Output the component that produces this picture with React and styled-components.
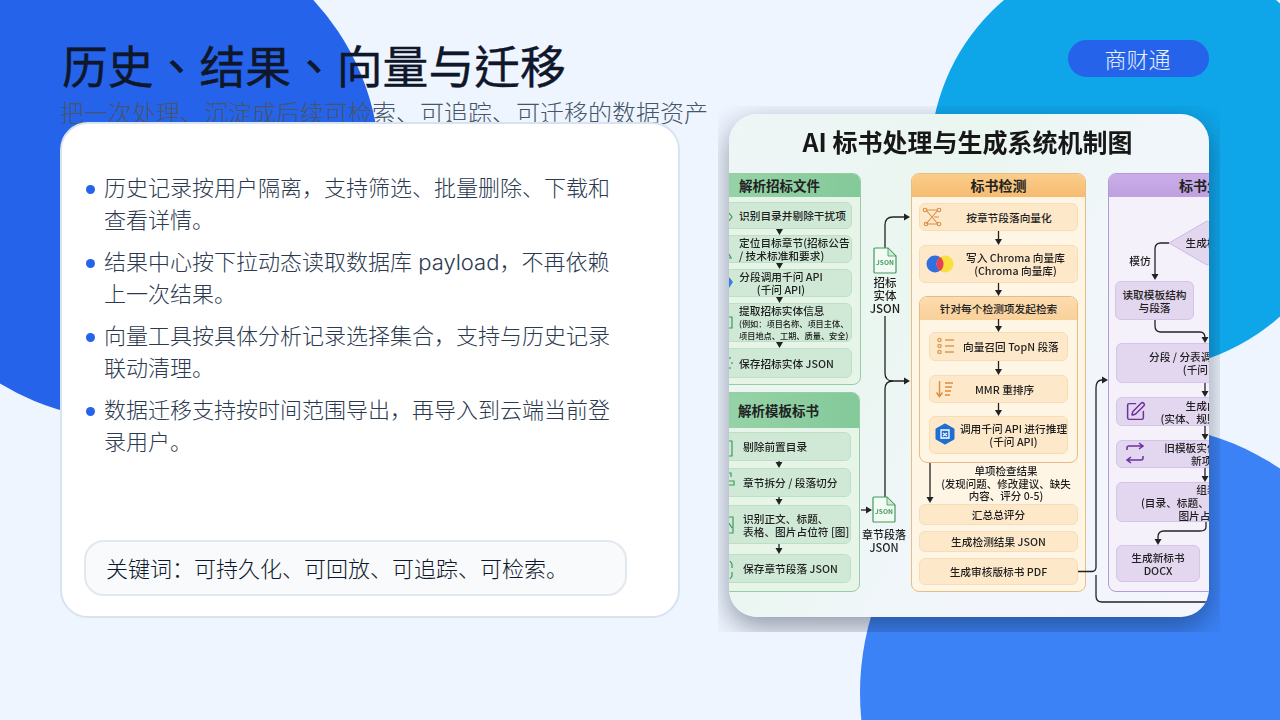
import React from 'react';
import styled, { createGlobalStyle } from 'styled-components';
import { SquarePen } from 'lucide-react';

const OX = 729;
const OY = 114;
const FONT = 'Inter, "Noto Sans CJK SC", "Noto Sans", sans-serif';
const DIAGRAM_FONT = '"Noto Sans CJK SC", "Noto Sans", sans-serif';

const Global = createGlobalStyle`
  html, body { margin: 0; padding: 0; background: #eef5ff; }
  body { font-family: ${FONT}; }
`;

const Slide = styled.div`
  position: relative;
  width: 1280px;
  height: 720px;
  overflow: hidden;
  background: #eef5ff;
  padding: 0 71px 0 60px;
  box-sizing: border-box;
`;

const Blob = styled.div`
  position: absolute;
  left: ${p => p.$x}px;
  top: ${p => p.$y}px;
  width: ${p => p.$size}px;
  height: ${p => p.$size}px;
  border-radius: 50%;
  background: ${p => p.$color};
`;

const Header = styled.header`
  position: relative;
  height: 122px;
  display: flex;
  justify-content: space-between;
  align-items: flex-start;
`;

const TitleBlock = styled.div`
  padding-top: 34px;
`;

const Title = styled.h1`
  margin: 0 0 0 2px;
  font-family: "Noto Sans CJK TC", "Noto Sans CJK SC", sans-serif;
  font-size: 45.8px;
  line-height: 60px;
  font-weight: 400;
  -webkit-text-stroke: 0.4px #0f172a;
  color: #0f172a;
  white-space: nowrap;
`;

const Subtitle = styled.p`
  margin: 4px 0 0;
  font-size: 24px;
  line-height: 32px;
  font-weight: 300;
  color: #475569;
  white-space: nowrap;
`;

const Pill = styled.div`
  margin-top: 40px;
  width: 141px;
  height: 37px;
  box-sizing: border-box;
  padding-right: 2px;
  border-radius: 19px;
  background: #2563eb;
  color: #e8f0ff;
  font-size: 22px;
  line-height: 40px;
  text-align: center;
  font-weight: 300;
`;

const Content = styled.main`
  position: relative;
  display: flex;
  align-items: flex-start;
  gap: 38px;
`;

const Card = styled.section`
  flex: none;
  width: 620px;
  height: 496px;
  box-sizing: border-box;
  background: #fff;
  border: 2px solid #d8e3f0;
  border-radius: 28px;
  padding: 48px 51px 20px 22px;
  display: flex;
  flex-direction: column;
  justify-content: space-between;
`;

const Bullets = styled.ul`
  list-style: none;
  margin: 0;
  padding: 0;
  display: flex;
  flex-direction: column;
  gap: 10px;
`;

const Bullet = styled.li`
  display: flex;
  align-items: flex-start;
  gap: 9px;
  font-size: 22px;
  line-height: 32px;
  font-weight: 300;
  color: #2c3a50;
`;

const Dot = styled.span`
  flex: none;
  width: 9px;
  height: 9px;
  margin: 13px 0 0 2px;
  border-radius: 50%;
  background: #2563eb;
`;

const Keywords = styled.div`
  height: 56px;
  box-sizing: border-box;
  padding-left: 20px;
  border: 2px solid #e2e8f0;
  border-radius: 20px;
  background: #f8fafc;
  color: #0f172a;
  font-size: 22px;
  font-weight: 300;
  line-height: 54px;
  white-space: nowrap;
`;

const ShadowClip = styled.div`
  flex: none;
  width: 502px;
  height: 526px;
  margin-top: -16px;
  padding: 8px 11px 0;
  box-sizing: border-box;
  overflow: hidden;
`;

const Figure = styled.figure`
  position: relative;
  margin: 0;
  width: 480px;
  height: 503px;
  border-radius: 28px;
  box-shadow: 0 10px 28px rgba(15, 23, 42, 0.42);
`;

const Canvas = styled.div`
  position: absolute;
  inset: 0;
  overflow: hidden;
  border-radius: 28px;
  background: linear-gradient(120deg, #eef6f6 0%, #eaf6f0 35%, #f1f6fb 60%, #f4f5fd 100%);
  color: #1f1f1f;
  font-family: ${DIAGRAM_FONT};
  font-weight: 500;
  filter: blur(0.3px);
`;

const DiagramTitle = styled.div`
  position: absolute;
  left: 0;
  right: 3px;
  top: 10px;
  text-align: center;
  font-size: 25px;
  line-height: 34px;
  font-weight: 700;
  color: #171717;
  white-space: nowrap;
`;

const TONES = {
  green: { panel: '#e7f5e9', line: '#97cca5', head: 'linear-gradient(90deg,#96d4a8,#84c99a)', soft: '', step: '#cfe9d6', edge: '#bce0c6' },
  orange: { panel: '#fff5e4', line: '#e7bd83', head: 'linear-gradient(180deg,#fbcd8a,#f6bb70)', soft: 'linear-gradient(180deg,#fcdcae,#f9d09a)', step: '#fde8ca', edge: '#f8dcb3' },
  purple: { panel: '#f5f1fb', line: '#b49bd8', head: 'linear-gradient(180deg,#c9ade8,#bfa0e0)', soft: '', step: '#e3d6ef', edge: '#d4c4e7' },
};

const Panel = styled.div`
  position: absolute;
  left: ${p => p.$x}px;
  top: ${p => p.$y}px;
  width: ${p => p.$w}px;
  height: ${p => p.$h}px;
  box-sizing: border-box;
  border: 1px solid ${p => TONES[p.$tone].line};
  border-radius: 8px;
  background: ${p => TONES[p.$tone].panel};
  overflow: hidden;
`;

const PanelHead = styled.div`
  height: ${p => p.$h}px;
  box-sizing: border-box;
  background: ${p => (p.$soft ? TONES[p.$tone].soft : TONES[p.$tone].head)};
  font-size: ${p => p.$size}px;
  line-height: ${p => p.$h}px;
  font-weight: ${p => (p.$soft ? 500 : 700)};
  color: #222;
  text-align: ${p => (p.$pad ? 'left' : 'center')};
  padding-left: ${p => p.$pad || 0}px;
  white-space: nowrap;
`;

const Step = styled.div`
  position: absolute;
  left: ${p => p.$x}px;
  top: ${p => p.$y}px;
  width: ${p => p.$w}px;
  height: ${p => p.$h}px;
  box-sizing: border-box;
  border: 1px solid ${p => TONES[p.$tone].edge};
  border-radius: 6px;
  background: ${p => TONES[p.$tone].step};
  display: flex;
  flex-direction: column;
  justify-content: center;
  align-items: ${p => (p.$pad ? 'flex-start' : 'center')};
  padding-left: ${p => p.$pad || p.$shift || 0}px;
  padding-right: ${p => p.$padRight || 0}px;
  font-size: 10.7px;
  line-height: 13px;
  white-space: nowrap;
  text-align: center;
`;

const Note = styled.span`
  font-size: ${p => p.$size}px;
  line-height: ${p => p.$lh}px;
`;

const Label = styled.div`
  position: absolute;
  left: ${p => p.$x}px;
  top: ${p => p.$y}px;
  width: ${p => p.$w}px;
  text-align: center;
  font-size: ${p => p.$size}px;
  line-height: ${p => p.$lh}px;
  white-space: nowrap;
`;

const Wires = styled.svg`
  position: absolute;
  left: 0;
  top: 0;
  width: 480px;
  height: 503px;
  pointer-events: none;
`;

const Pen = styled.div`
  position: absolute;
  left: 396px;
  top: 287px;
  color: #6d2fa3;
  display: flex;
`;

const panels = [
  { tone: 'green', x: 719, y: 173, r: 861, b: 385, head: 23, size: 13.5, pad: 19, title: '解析招标文件' },
  { tone: 'green', x: 719, y: 392, r: 860, b: 592, head: 35, size: 13.5, pad: 18, title: '解析模板标书' },
  { tone: 'orange', x: 911, y: 173, r: 1086, b: 592, head: 23, size: 14, title: '标书检测' },
  { tone: 'orange', x: 919, y: 296, r: 1078, b: 463, head: 23, size: 10.7, soft: true, title: '针对每个检测项发起检索' },
  { tone: 'purple', x: 1108, y: 173, r: 1306, b: 592, head: 23, size: 14, title: '标书生成' },
];

const steps = [
  { tone: 'green', x: 719, y: 202, r: 852, b: 229, pad: 19, lines: ['识别目录并剔除干扰项'] },
  { tone: 'green', x: 719, y: 235, r: 852, b: 263, pad: 19, lines: ['定位目标章节(招标公告', '/ 技术标准和要求)'] },
  { tone: 'green', x: 719, y: 269, r: 852, b: 297, padRight: 9, lines: ['分段调用千问 API', '(千问 API)'] },
  { tone: 'green', x: 719, y: 303, r: 852, b: 342, pad: 19, lines: ['提取招标实体信息'], notes: ['(例如：项目名称、项目主体、', '项目地点、工期、质量、安全)'] },
  { tone: 'green', x: 719, y: 348, r: 852, b: 378, pad: 19, lines: ['保存招标实体 JSON'] },
  { tone: 'green', x: 719, y: 432, r: 851, b: 461, pad: 23, lines: ['剔除前置目录'] },
  { tone: 'green', x: 719, y: 468, r: 851, b: 497, pad: 23, lines: ['章节拆分 / 段落切分'] },
  { tone: 'green', x: 719, y: 505, r: 851, b: 544, pad: 23, lines: ['识别正文、标题、', '表格、图片占位符 [图]'] },
  { tone: 'green', x: 719, y: 554, r: 851, b: 583, pad: 23, lines: ['保存章节段落 JSON'] },
  { tone: 'orange', x: 919, y: 203, r: 1078, b: 231, lines: ['按章节段落向量化'], shift: 21 },
  { tone: 'orange', x: 919, y: 245, r: 1078, b: 283, lines: ['写入 Chroma 向量库', '(Chroma 向量库)'], shift: 34 },
  { tone: 'orange', x: 929, y: 332, r: 1068, b: 361, lines: ['向量召回 TopN 段落'], pad: 33 },
  { tone: 'orange', x: 929, y: 375, r: 1068, b: 403, lines: ['MMR 重排序'], pad: 45 },
  { tone: 'orange', x: 929, y: 416, r: 1068, b: 454, lines: ['调用千问 API 进行推理', '(千问 API)'], shift: 30 },
  { tone: 'orange', x: 919, y: 504, r: 1078, b: 525, lines: ['汇总总评分'] },
  { tone: 'orange', x: 919, y: 531, r: 1078, b: 552, lines: ['生成检测结果 JSON'] },
  { tone: 'orange', x: 919, y: 558, r: 1078, b: 585, lines: ['生成审核版标书 PDF'] },
  { tone: 'purple', x: 1115, y: 281, r: 1194, b: 320, lines: ['读取模板结构', '与段落'] },
  { tone: 'purple', x: 1116, y: 343, r: 1298, b: 383, lines: ['分段 / 分表调用千问生成', '(千问 API)'] },
  { tone: 'purple', x: 1116, y: 397, r: 1298, b: 426, lines: ['生成内容', '(实体、规则、模板)'] },
  { tone: 'purple', x: 1116, y: 440, r: 1298, b: 468, lines: ['旧模板实体替换为', '新项目'] },
  { tone: 'purple', x: 1116, y: 482, r: 1298, b: 522, lines: ['组装', '(目录、标题、正文、表格、', '图片占位符)'] },
  { tone: 'purple', x: 1116, y: 545, r: 1200, b: 582, lines: ['生成新标书', 'DOCX'] },
];

const labels = [
  { x: 865, w: 40, y: 276, lh: 13, size: 11.5, lines: ['招标', '实体', 'JSON'] },
  { x: 854, w: 60, y: 528, lh: 13, size: 11, lines: ['章节段落', 'JSON'] },
  { x: 916, w: 180, y: 465, lh: 12.5, size: 10.5, lines: ['单项检查结果', '(发现问题、修改建议、缺失', '内容、评分 0-5)'] },
  { x: 1122, w: 36, y: 254, lh: 14, size: 10.7, lines: ['模仿'] },
  { x: 1167, w: 80, y: 236, lh: 14, size: 10.7, lines: ['生成模板'] },
];

const wires = [
  'M885 248V225Q885 217 893 217H905',
  'M885 316V373Q885 381 893 381H905',
  'M885 497V389Q885 381 893 381',
  'M861 510H868',
  'M1078 571.5H1092Q1096 571.5 1096 567V388Q1096 380 1102 380H1103',
  'M1096 575V596Q1096 602 1102 602H1209',
  'M930 463V497',
  'M1169 243H1161Q1155 243 1155 249V275',
  'M1155 320V326Q1155 332 1161 332H1200Q1205 332 1205 338',
  'M1206 522V527Q1206 531 1200 531H1164Q1158 531 1158 537V540',
];

const downs = [
  [779.5, 229, 235], [779.5, 263, 269], [779.5, 297, 303], [779.5, 342, 348],
  [779, 461, 468], [779, 497, 505], [779, 544, 554],
  [998.5, 231, 245], [998.5, 283, 296], [998.5, 319, 332], [998.5, 361, 375], [998.5, 403, 416],
  [1205, 383, 397], [1205, 426, 440], [1205, 468, 482],
];

const heads = [
  [910, 217, 'r'], [910, 381, 'r'], [872, 510, 'r'], [1108, 380, 'r'],
  [930, 503, 'd'], [1155, 280, 'd'], [1205, 343, 'd'], [1158, 545, 'd'],
];

const Head = ({ x, y, dir }) => (
  <polygon
    fill="#222"
    points={dir === 'r' ? `${x},${y} ${x - 6},${y - 3.5} ${x - 6},${y + 3.5}` : `${x},${y} ${x - 3.5},${y - 6} ${x + 3.5},${y - 6}`}
  />
);

const JsonDoc = ({ x, y }) => (
  <g>
    <path d={`M${x + 1} ${y}H${x + 14}L${x + 22} ${y + 8}V${y + 24}Q${x + 22} ${y + 25} ${x + 21} ${y + 25}H${x + 1}Q${x} ${y + 25} ${x} ${y + 24}V${y + 1}Q${x} ${y} ${x + 1} ${y}Z`} fill="#f2faf4" stroke="#3f9a5c" strokeWidth="1.2" />
    <path d={`M${x + 14} ${y}V${y + 8}H${x + 22}Z`} fill="#cfe9d6" stroke="#3f9a5c" strokeWidth="0.8" />
    <text x={x + 11} y={y + 17} fontSize="6.6" fontWeight="700" fill="#3f9a5c" textAnchor="middle">JSON</text>
  </g>
);

const Diagram = () => (
  <Canvas>
    <DiagramTitle>AI 标书处理与生成系统机制图</DiagramTitle>
    {panels.map(p => (
      <Panel key={p.title} $tone={p.tone} $x={p.x - OX} $y={p.y - OY} $w={p.r - p.x} $h={p.b - p.y}>
        <PanelHead $tone={p.tone} $h={p.head} $size={p.size} $pad={p.pad} $soft={p.soft}>{p.title}</PanelHead>
      </Panel>
    ))}
    {steps.map(s => (
      <Step key={s.lines[0]} $tone={s.tone} $x={s.x - OX} $y={s.y - OY} $w={s.r - s.x} $h={s.b - s.y} $pad={s.pad} $padRight={s.padRight} $shift={s.shift}>
        {s.lines.map(l => <span key={l}>{l}</span>)}
        {s.notes && s.notes.map(n => <Note key={n} $size={8.2} $lh={12}>{n}</Note>)}
      </Step>
    ))}
    <Wires viewBox={`${OX} ${OY} 480 503`}>
      <polygon points="1169,243 1207,221 1245,243 1207,265" fill="#e3d6ef" stroke="#cdb9e4" />
      <g fill="none" stroke="#222" strokeWidth="1.3">
        {wires.map(d => <path key={d} d={d} />)}
        {downs.map(([x, a, b]) => <path key={`${x}-${a}`} d={`M${x} ${a}V${b - 4}`} />)}
      </g>
      {downs.map(([x, a, b]) => <Head key={`h${x}-${a}`} x={x} y={b} dir="d" />)}
      {heads.map(([x, y, dir]) => <Head key={`${x}-${y}`} x={x} y={y} dir={dir} />)}
      <JsonDoc x={874} y={248} />
      <JsonDoc x={873} y={497} />

      <g stroke="#d98f45" strokeWidth="1.1" fill="none">
        <path d="M926 210L937 210M926 210L938 224M938 210L926 224M927 224H938M934 217H939" />
        <circle cx="925" cy="210" r="1.8" />
        <circle cx="939" cy="210" r="1.8" />
        <circle cx="926" cy="224" r="1.8" />
        <circle cx="939" cy="224" r="1.8" />
      </g>

      <circle cx="935" cy="264" r="8.5" fill="#2f6fe0" />
      <circle cx="945" cy="264" r="8.5" fill="#f9e03c" />
      <path d="M940 257.1A8.5 8.5 0 0 1 940 270.9A8.5 8.5 0 0 1 940 257.1Z" fill="#e8405c" />

      <g stroke="#dc9a52" strokeWidth="1.4" fill="none">
        <circle cx="939.5" cy="340" r="1.6" />
        <circle cx="939.5" cy="346" r="1.6" />
        <circle cx="939.5" cy="352" r="1.6" />
        <path d="M945 340H954M945 346H954M945 352H954" />
      </g>

      <g stroke="#dc8c3c" strokeWidth="1.4" fill="none">
        <path d="M939.5 381V396M936.5 392.5L939.5 396.5L942.5 392.5" />
        <path d="M945 383H953M945 387H952M945 391H951M945 395H950" />
      </g>

      <polygon points="945,425 953,429.5 953,438.5 945,443 937,438.5 937,429.5" fill="#1f6fd2" stroke="#1f6fd2" strokeWidth="3" strokeLinejoin="round" />
      <path d="M941 430H949V438H941ZM943 433L947 436M947 433L943 436" fill="none" stroke="#fff" strokeWidth="1.3" />

      <g stroke="#6d2fa3" strokeWidth="1.5" fill="none">
        <path d="M1127 450V448Q1127 446 1129 446H1142M1139 443L1143 446L1139 449" />
        <path d="M1143 456V458Q1143 460 1141 460H1128M1131 457L1127 460L1131 463" />
      </g>

      <g stroke="#3f9a5c" strokeWidth="1.2" fill="none">
        <path d="M729 213L732 217L729 221" />
        <path d="M729 254L731 258M729 258H732" />
        <path d="M729 317H732V328H729" />
        <path d="M730 357V360M732 362V365M730 367V370" strokeDasharray="2 1.5" />
        <path d="M729 441H732V456H729" />
        <path d="M729 473H731V477M729 485H734V481H729" />
        <path d="M729 517H733V533H729M729 523L732 528" />
        <path d="M730 561L732 564V568M732 572V576L730 579" />
      </g>
      <path d="M729 277L733 282L729 288Z" fill="#2f80e0" />
    </Wires>
    {labels.map(l => (
      <Label key={l.lines[0]} $x={l.x - OX} $y={l.y - OY} $w={l.w} $size={l.size} $lh={l.lh}>
        {l.lines.map(t => <div key={t}>{t}</div>)}
      </Label>
    ))}
    <Pen><SquarePen size={21} strokeWidth={1.7} /></Pen>
  </Canvas>
);

export default function App() {
  return (
    <>
      <Global />
      <Slide>
        <Blob $x={-120} $y={-80} $size={500} $color="#2563eb" />
        <Blob $x={930} $y={-50} $size={420} $color="#0ea5e9" />
        <Blob $x={860} $y={423} $size={540} $color="#3b82f6" />
        <Header>
          <TitleBlock>
            <Title>历史、结果、向量与迁移</Title>
            <Subtitle>把一次处理、沉淀成后续可检索、可追踪、可迁移的数据资产</Subtitle>
          </TitleBlock>
          <Pill>商财通</Pill>
        </Header>
        <Content>
          <Card>
            <Bullets>
              <Bullet><Dot /><span>历史记录按用户隔离，支持筛选、批量删除、下载和查看详情。</span></Bullet>
              <Bullet><Dot /><span>结果中心按下拉动态读取数据库 payload，不再依赖上一次结果。</span></Bullet>
              <Bullet><Dot /><span>向量工具按具体分析记录选择集合，支持与历史记录联动清理。</span></Bullet>
              <Bullet><Dot /><span>数据迁移支持按时间范围导出，再导入到云端当前登录用户。</span></Bullet>
            </Bullets>
            <Keywords>关键词：可持久化、可回放、可追踪、可检索。</Keywords>
          </Card>
          <ShadowClip>
            <Figure>
              <Diagram />
            </Figure>
          </ShadowClip>
        </Content>
      </Slide>
    </>
  );
}
